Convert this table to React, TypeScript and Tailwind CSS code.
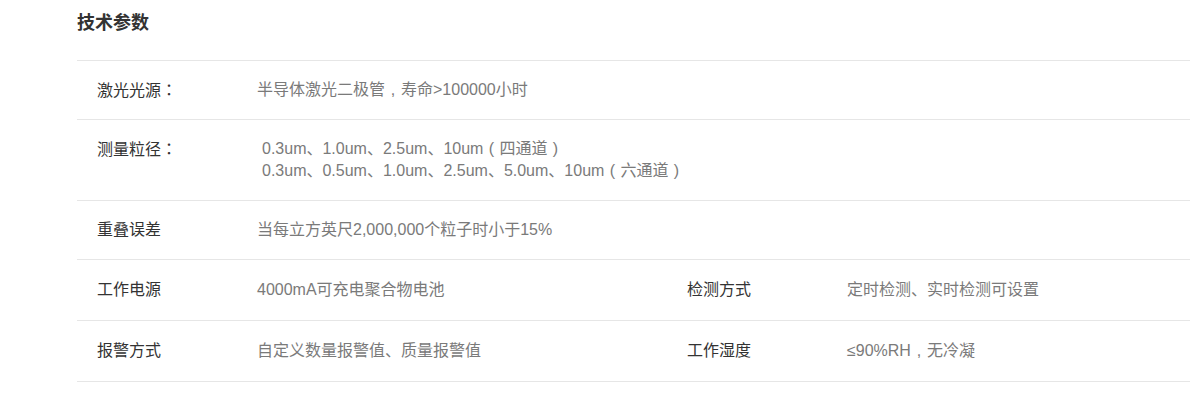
import React from "react";

const font = {
  fontFamily: '"Liberation Sans", "Noto Sans CJK SC", sans-serif',
};

function P({ children }: { children: React.ReactNode }) {
  return <span className="font-['Noto_Sans_CJK_TC',sans-serif]">{children}</span>;
}

function C({ children }: { children: React.ReactNode }) {
  return <span className="inline-block w-[16px] text-center">{children}</span>;
}

function Label({ children }: { children: React.ReactNode }) {
  return <div className="pl-[20px] text-[#333] flex items-center">{children}</div>;
}
function Value({ children }: { children: React.ReactNode }) {
  return <div className="text-[#7a7a7a] flex items-center">{children}</div>;
}

export default function App() {
  return (
    <div className="w-[1190px] h-[397px] bg-white overflow-hidden pl-[77px]" style={font}>
      <h2 className="mt-[11px] text-[18px] leading-[24px] font-bold text-[#333]">技术参数</h2>
      <div className="mt-[25px] text-[16px] leading-[22px]">
        <div className="grid grid-cols-[180px_410px_180px_1fr] h-[59px] border-t border-[#e6e6e6]">
          <Label>
            <span>
              激光光源<P>：</P>
            </span>
          </Label>
          <Value>
            <span>
              半导体激光二极管<C>,</C>寿命&gt;100000小时
            </span>
          </Value>
        </div>
        <div className="grid grid-cols-[180px_410px_180px_1fr] h-[81px] border-t border-[#e6e6e6]">
          <Label>
            <span className="self-start mt-[17px]">
              测量粒径<P>：</P>
            </span>
          </Label>
          <div className="col-span-3 text-[#7a7a7a] flex flex-col justify-center pl-[5px]">
            <div>
              0.3um、1.0um、2.5um、10um<C>(</C>四通道<C>)</C>
            </div>
            <div>
              0.3um、0.5um、1.0um、2.5um、5.0um、10um<C>(</C>六通道<C>)</C>
            </div>
          </div>
        </div>
        <div className="grid grid-cols-[180px_410px_180px_1fr] h-[59px] border-t border-[#e6e6e6]">
          <Label>重叠误差</Label>
          <Value>当每立方英尺2,000,000个粒子时小于15%</Value>
        </div>
        <div className="grid grid-cols-[180px_410px_180px_1fr] h-[61px] border-t border-[#e6e6e6]">
          <Label>工作电源</Label>
          <Value>4000mA可充电聚合物电池</Value>
          <Label>检测方式</Label>
          <Value>定时检测、实时检测可设置</Value>
        </div>
        <div className="grid grid-cols-[180px_410px_180px_1fr] h-[62px] border-t border-b border-[#e6e6e6]">
          <Label>报警方式</Label>
          <Value>自定义数量报警值、质量报警值</Value>
          <Label>工作湿度</Label>
          <Value>
            <span>
              ≤90%RH<C>,</C>无冷凝
            </span>
          </Value>
        </div>
      </div>
    </div>
  );
}
